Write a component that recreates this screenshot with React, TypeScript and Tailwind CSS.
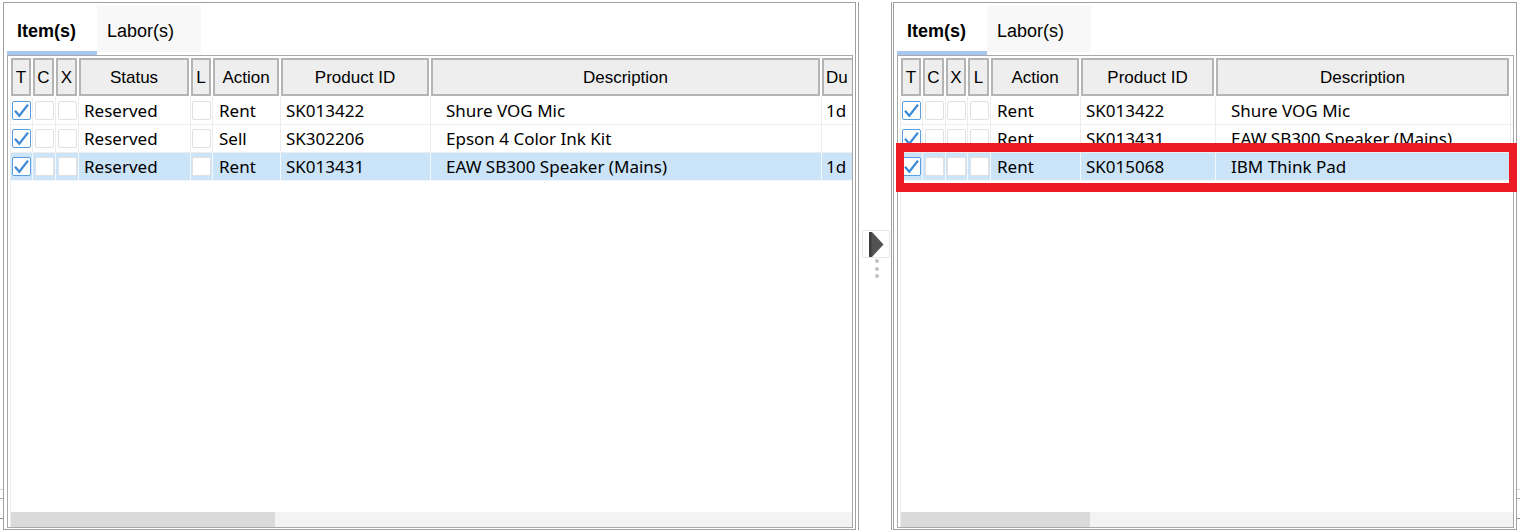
import React from "react";

type Col = {
  label: string;
  body: string;
  head: string;
  kind: "check" | "text";
  field: string;
  pad?: string;
  headAlign?: string;
};

type Row = Record<string, string | boolean | undefined>;

const leftCols: Col[] = [
  { label: "T", body: "w-[22px]", head: "w-[20px]", kind: "check", field: "t" },
  { label: "C", body: "w-[23px]", head: "w-[21px]", kind: "check", field: "c" },
  { label: "X", body: "w-[23px]", head: "w-[21px]", kind: "check", field: "x" },
  { label: "Status", body: "w-[112px]", head: "w-[110px]", kind: "text", field: "status", pad: "pl-[5px]" },
  { label: "L", body: "w-[22px]", head: "w-[20px]", kind: "check", field: "l" },
  { label: "Action", body: "w-[68px]", head: "w-[66px]", kind: "text", field: "action", pad: "pl-[6px]" },
  { label: "Product ID", body: "w-[150px]", head: "w-[148px]", kind: "text", field: "pid", pad: "pl-[5px]" },
  { label: "Description", body: "w-[391px]", head: "w-[389px]", kind: "text", field: "desc", pad: "pl-[15px]" },
  { label: "Du", body: "w-[72px]", head: "w-[70px]", kind: "text", field: "du", pad: "pl-[4px]", headAlign: "justify-start pl-[2px]" },
];

const rightCols: Col[] = [
  { label: "T", body: "w-[22px]", head: "w-[20px]", kind: "check", field: "t" },
  { label: "C", body: "w-[23px]", head: "w-[21px]", kind: "check", field: "c" },
  { label: "X", body: "w-[22px]", head: "w-[20px]", kind: "check", field: "x" },
  { label: "L", body: "w-[23px]", head: "w-[21px]", kind: "check", field: "l" },
  { label: "Action", body: "w-[90px]", head: "w-[88px]", kind: "text", field: "action", pad: "pl-[6px]" },
  { label: "Product ID", body: "w-[135px]", head: "w-[133px]", kind: "text", field: "pid", pad: "pl-[5px]" },
  { label: "Description", body: "w-[295px]", head: "w-[293px]", kind: "text", field: "desc", pad: "pl-[15px]" },
];

const leftRows: Row[] = [
  { t: true, status: "Reserved", action: "Rent", pid: "SK013422", desc: "Shure VOG Mic", du: "1d" },
  { t: true, status: "Reserved", action: "Sell", pid: "SK302206", desc: "Epson 4 Color Ink Kit", du: "" },
  { t: true, status: "Reserved", action: "Rent", pid: "SK013431", desc: "EAW SB300 Speaker (Mains)", du: "1d", sel: true },
];

const rightRows: Row[] = [
  { t: true, action: "Rent", pid: "SK013422", desc: "Shure VOG Mic" },
  { t: true, action: "Rent", pid: "SK013431", desc: "EAW SB300 Speaker (Mains)" },
  { t: true, action: "Rent", pid: "SK015068", desc: "IBM Think Pad", sel: true },
];

function Box({ checked }: { checked: boolean }) {
  if (checked) {
    return (
      <div className="w-[19px] h-[19px] shrink-0 rounded-[2px] border border-[#5b9ee0] bg-white flex">
        <svg width="17" height="17" viewBox="0 0 17 17">
          <path d="M2 8.8 L6.3 13.8 L15 2.6" fill="none" stroke="#3f8ad8" strokeWidth="2.3" />
        </svg>
      </div>
    );
  }
  return <div className="w-[19px] h-[19px] shrink-0 rounded-[2px] border border-[#e1e1e1] bg-white" />;
}

function Panel({ width, cols, rows, thumb }: { width: string; cols: Col[]; rows: Row[]; thumb: string }) {
  return (
    <div className={`${width} mt-[2px] h-[528px] shrink-0 border border-[#a0a0a0] flex flex-col bg-white`}>
      <div className="mt-[2px] ml-[3px] h-[50px] flex shrink-0 font-['Liberation_Sans',Arial,sans-serif] text-[18px] text-black">
        <div className="w-[90px] h-[50px] border-b-4 border-[#a6c8ee] bg-white pl-[10px] pt-[7px] flex items-center font-bold">
          Item(s)
        </div>
        <div className="w-[104px] h-[47px] bg-[#f8f8f8] pl-[10px] pt-[6px] flex items-center">Labor(s)</div>
      </div>
      <div className="ml-[3px] mr-[2px] mb-[1px] flex-1 min-h-0 border border-[#a9a9a9] pt-[2px] pl-[2px] flex flex-col overflow-hidden">
        <div className="h-[38px] mb-[1px] pl-[1px] flex shrink-0 font-['Liberation_Sans',Arial,sans-serif] text-[17px] text-black">
          {cols.map((c) => (
            <div
              key={c.label}
              className={`${c.head} h-full mr-[2px] shrink-0 bg-[#eeeeee] border-2 border-[#b4b4b4] pt-[1px] flex items-center ${c.headAlign ?? "justify-center"} whitespace-nowrap overflow-hidden`}
            >
              {c.label}
            </div>
          ))}
        </div>
        <div className="flex-1 min-h-0 border-l border-[#ececec] flex flex-col">
          {rows.map((r, i) => (
            <div
              key={i}
              className={`h-[28px] shrink-0 flex border-b ${r.sel ? "bg-[#cce4f8] border-[#f4f8fc]" : "bg-white border-[#ededed]"} font-['Noto_Sans',sans-serif] text-[17px] text-black`}
            >
              {cols.map((c) => (
                <div
                  key={c.label}
                  className={`${c.body} shrink-0 h-full border-r ${r.sel ? "border-[#f4f8fc]" : "border-[#ededed]"} flex items-center whitespace-nowrap overflow-hidden ${c.kind === "check" ? "justify-center" : c.pad ?? ""}`}
                >
                  {c.kind === "check" ? <Box checked={!!r[c.field]} /> : (r[c.field] as string)}
                </div>
              ))}
            </div>
          ))}
          <div className="flex-1" />
          <div className="h-[15px] shrink-0 bg-[#f3f3f3] flex">
            <div className={`${thumb} h-full bg-[#dadada]`} />
          </div>
        </div>
      </div>
    </div>
  );
}

function EdgeMarks() {
  return (
    <div className="w-[3px] h-full shrink-0 flex flex-col">
      <div className="mt-[489px] h-px bg-[#d4d4d4]" />
      <div className="mt-[8px] h-px bg-[#a8a8a8]" />
      <div className="mt-[19px] h-px bg-[#8c8c8c]" />
    </div>
  );
}

function Splitter() {
  return (
    <div className="w-[34px] mt-[2px] h-[528px] shrink-0 border-x border-[#a0a0a0] flex flex-col items-start pl-[3px] pt-[228px]">
      <div className="w-[28px] h-[28px] rounded-[3px] border border-[#e6e6e6] bg-white flex items-center justify-center">
        <svg width="15" height="25" viewBox="0 0 15 25">
          <polygon points="0,0 3,0 14.5,12.5 3,25 0,25" fill="#535353" />
          <rect x="0" y="0" width="2.5" height="25" fill="#3c3c3c" />
        </svg>
      </div>
      <div className="w-[28px] mt-[1px] flex flex-col items-center gap-[3.5px] pl-[2px]">
        <div className="w-[4px] h-[4px] rounded-full bg-[#c2c2c2]" />
        <div className="w-[4px] h-[4px] rounded-full bg-[#c2c2c2]" />
        <div className="w-[4px] h-[4px] rounded-full bg-[#c2c2c2]" />
      </div>
    </div>
  );
}

export default function App() {
  return (
    <div className="w-[1520px] h-[531px] bg-white flex relative overflow-hidden">
      <EdgeMarks />
      <Panel width="w-[853px]" cols={leftCols} rows={leftRows} thumb="w-[264px]" />
      <div className="w-[2px] shrink-0" />
      <Splitter />
      <div className="w-[1px] shrink-0" />
      <Panel width="w-[624px]" cols={rightCols} rows={rightRows} thumb="w-[189px]" />
      <EdgeMarks />
      <div className="absolute left-[896px] top-[143px] w-[621px] h-[49px] border-[#ed1c24] border-x-[8px] border-y-[9px]" />
    </div>
  );
}
